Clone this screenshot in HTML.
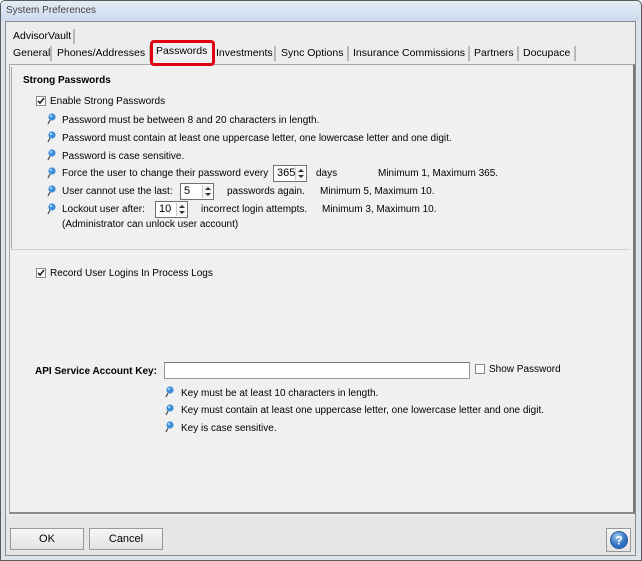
<!DOCTYPE html>
<html><head><meta charset="utf-8"><style>
*{margin:0;padding:0;box-sizing:border-box}
body{width:642px;height:561px;overflow:hidden;background:#fff;font-family:"Liberation Sans",Arial,sans-serif;font-size:10px;color:#000;position:relative}
.a{position:absolute;white-space:nowrap}
.t{margin-top:1px}
.win{position:absolute;left:0;top:0;width:642px;height:561px;border:1px solid #5a5a5a;border-radius:5px 5px 0 0;background:#dde3ea}
.title{position:absolute;left:1px;top:1px;width:638px;height:20px;background:linear-gradient(#e4edf7,#cbdaec);border-radius:4px 4px 0 0}
.inner{position:absolute;left:5px;top:21px;width:631px;height:535px;background:#ededed;border:1px solid #8a8a8a}
.tab{position:absolute;height:15px;line-height:15px;padding-left:3px;border-right:2px solid #b8b8b8;white-space:nowrap;overflow:hidden;font-size:10.5px}
.panel{position:absolute;left:9px;top:64px;width:626px;height:450px;background:#f0f0f0;border-top:1px solid #a8a8a8;border-left:1px solid #a8a8a8;border-right:2px solid #7a7a7a;border-bottom:2px solid #8a8a8a}
.pin{position:absolute;width:10px;height:12px}
.cb{position:absolute;width:10px;height:10px;border:1px solid #8a8a8a;background:#fff}
.spin{position:absolute;height:17px;background:#fff;border:1px solid #707070;padding-left:3px;line-height:15px;font-size:11px}
.spin i{position:absolute;right:1px;top:1px;width:10px;height:13px;border-left:1px solid #ccc;background:#f4f4f4}
.spin i:before{content:"";position:absolute;left:2px;top:2px;border:3px solid transparent;border-bottom:3px solid #333;border-top:0}
.spin i:after{content:"";position:absolute;left:2px;top:8px;border:3px solid transparent;border-top:3px solid #333;border-bottom:0}
.btn{position:absolute;height:22px;border:1px solid #999;background:linear-gradient(#f7f7f7,#e2e2e2);text-align:center;line-height:20px;font-size:11px}
</style></head><body>
<div class="win"></div>
<div class="title"></div>
<div class="a" style="left:6px;top:5px;color:#444;font-size:10px">System Preferences</div>
<div class="inner"></div>
<div class="tab" style="left:10px;top:29px;width:65px">AdvisorVault</div>
<div class="tab" style="left:10px;top:46px;width:42px">General</div>
<div class="tab" style="left:54px;top:46px;width:97px">Phones/Addresses</div>
<div class="tab" style="left:213px;top:46px;width:63px;padding-left:3px">Investments</div>
<div class="tab" style="left:278px;top:46px;width:71px">Sync Options</div>
<div class="tab" style="left:350px;top:46px;width:120px">Insurance Commissions</div>
<div class="tab" style="left:471px;top:46px;width:48px">Partners</div>
<div class="tab" style="left:520px;top:46px;width:56px">Docupace</div>
<div class="panel"></div>
<div class="a" style="left:150px;top:40px;width:65px;height:26px;border:3px solid #e00010;border-radius:4px;background:#f0f0f0"></div>
<div class="a" style="left:156px;top:45px;font-size:10.5px">Passwords</div>
<div class="a" style="left:11px;top:249px;width:618px;height:1px;background:#d0d0d0"></div>
<div class="a" style="left:11px;top:67px;width:1px;height:182px;background:#a8a8a8"></div>
<div class="a t" style="left:23px;top:74px;font-weight:bold">Strong Passwords</div>
<div class="cb" style="left:36px;top:96px"><svg width="8" height="8" style="position:absolute;left:0;top:0"><path d="M1 4 L3 6 L7 1" stroke="#222" stroke-width="1.6" fill="none"/></svg></div>
<div class="a t" style="left:50px;top:95px">Enable Strong Passwords</div>

<svg width="0" height="0" style="position:absolute"><defs><g id="p"><path d="M3 7 L1 11" stroke="#555" stroke-width="1.3"/><circle cx="5" cy="4" r="3.6" fill="#3d8fdc"/><circle cx="4" cy="3" r="1.2" fill="#a9d2f5"/></g></defs></svg>
<svg class="pin" style="left:47px;top:113px"><use href="#p"/></svg>
<svg class="pin" style="left:47px;top:131px"><use href="#p"/></svg>
<svg class="pin" style="left:47px;top:149px"><use href="#p"/></svg>
<svg class="pin" style="left:47px;top:167px"><use href="#p"/></svg>
<svg class="pin" style="left:47px;top:185px"><use href="#p"/></svg>
<svg class="pin" style="left:47px;top:203px"><use href="#p"/></svg>
<div class="a t" style="left:62px;top:114px">Password must be between 8 and 20 characters in length.</div>
<div class="a t" style="left:62px;top:132px">Password must contain at least one uppercase letter, one lowercase letter and one digit.</div>
<div class="a t" style="left:62px;top:150px">Password is case sensitive.</div>
<div class="a t" style="left:62px;top:167px">Force the user to change their password every</div>
<div class="spin" style="left:273px;top:165px;width:34px">365<i></i></div>
<div class="a t" style="left:316px;top:167px">days</div>
<div class="a t" style="left:378px;top:167px">Minimum 1, Maximum 365.</div>
<div class="a t" style="left:62px;top:185px">User cannot use the last:</div>
<div class="spin" style="left:180px;top:183px;width:34px">5<i></i></div>
<div class="a t" style="left:227px;top:185px">passwords again.</div>
<div class="a t" style="left:320px;top:185px">Minimum 5, Maximum 10.</div>
<div class="a t" style="left:62px;top:203px">Lockout user after:</div>
<div class="spin" style="left:155px;top:201px;width:33px">10<i></i></div>
<div class="a t" style="left:201px;top:203px">incorrect login attempts.</div>
<div class="a t" style="left:322px;top:203px">Minimum 3, Maximum 10.</div>
<div class="a t" style="left:62px;top:218px">(Administrator can unlock user account)</div>

<div class="cb" style="left:36px;top:268px"><svg width="8" height="8" style="position:absolute;left:0;top:0"><path d="M1 4 L3 6 L7 1" stroke="#222" stroke-width="1.6" fill="none"/></svg></div>
<div class="a t" style="left:50px;top:267px">Record User Logins In Process Logs</div>

<div class="a t" style="left:35px;top:365px;font-weight:bold">API Service Account Key:</div>
<div class="a" style="left:164px;top:362px;width:306px;height:17px;background:#fff;border:1px solid #999;border-top-color:#777"></div>
<div class="cb" style="left:475px;top:364px;background:#fafafa"></div>
<div class="a t" style="left:489px;top:363px">Show Password</div>
<svg class="pin" style="left:165px;top:386px"><use href="#p"/></svg>
<svg class="pin" style="left:165px;top:404px"><use href="#p"/></svg>
<svg class="pin" style="left:165px;top:421px"><use href="#p"/></svg>
<div class="a t" style="left:181px;top:387px">Key must be at least 10 characters in length.</div>
<div class="a t" style="left:181px;top:404px">Key must contain at least one uppercase letter, one lowercase letter and one digit.</div>
<div class="a t" style="left:181px;top:422px">Key is case sensitive.</div>

<div class="a" style="left:6px;top:516px;width:629px;height:39px;background:#e6e6e6"></div>
<div class="btn" style="left:10px;top:528px;width:74px">OK</div>
<div class="btn" style="left:89px;top:528px;width:74px">Cancel</div>
<div class="btn" style="left:606px;top:528px;width:25px;height:24px;padding-top:2px"><svg width="20" height="20"><defs><radialGradient id="g" cx="40%" cy="30%"><stop offset="0" stop-color="#a8d0f5"/><stop offset="1" stop-color="#2d6fc0"/></radialGradient></defs><circle cx="10" cy="9" r="8.5" fill="url(#g)" stroke="#2a5c9c"/><text x="10" y="13.5" font-family="Liberation Sans" font-weight="bold" font-size="12" fill="#fff" text-anchor="middle">?</text></svg></div>
</body></html>
